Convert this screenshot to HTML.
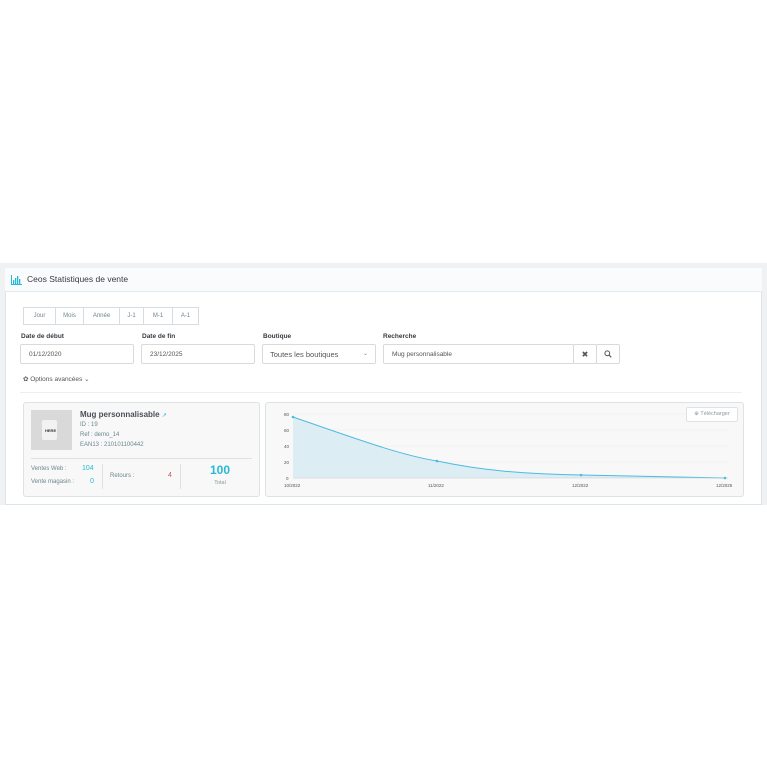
<!DOCTYPE html>
<html><head><meta charset="utf-8"><style>
*{box-sizing:border-box;margin:0;padding:0}
body{width:767px;height:767px;background:#fff;font-family:"Liberation Sans",sans-serif;position:relative;overflow:hidden;color:#363a41}
.a{position:absolute}
.band{left:0;top:263px;width:767px;height:242px;background:#eff1f2}
.panel{left:5px;top:268px;width:757px;height:237px;background:#fff;border:1px solid #dbe6e9}
.head{left:5px;top:268px;width:757px;height:24px;background:#fafbfc;border-bottom:1px solid #e4eaec}
.lbl{font-size:6.5px;font-weight:bold;color:#363a41}
.inp{height:20px;border:1px solid #dadada;border-radius:2px;background:#fff;font-size:6.5px;color:#555;padding-left:8px;line-height:19px}
.btn{top:307px;height:18px;border:1px solid #d5dde0;font-size:6px;color:#6c868e;text-align:center;line-height:17px;background:#fff}
.card{border:1px solid #dde2e4;border-radius:3px;background:#f8f8f8}
.s{font-size:6px;color:#6c868e}
</style></head><body>
<div class="a band"></div>
<div class="a panel"></div>
<div class="a head"></div>
<svg class="a" style="left:11px;top:275px" width="11" height="10" viewBox="0 0 11 10"><g fill="#25b9d7"><rect x="0" y="0" width="1" height="10"/><rect x="0" y="9" width="11" height="1"/><rect x="2" y="5" width="1.3" height="4"/><rect x="4" y="3" width="1.3" height="6"/><rect x="6" y="1" width="1.3" height="8"/><rect x="8" y="4" width="1.3" height="5"/></g></svg>
<div class="a" style="left:27px;top:274px;font-size:8.5px;color:#363a41">Ceos Statistiques de vente</div>
<div class="a btn" style="left:23px;width:33px">Jour</div>
<div class="a btn" style="left:55px;width:29px">Mois</div>
<div class="a btn" style="left:83px;width:37px">Année</div>
<div class="a btn" style="left:119px;width:25px">J-1</div>
<div class="a btn" style="left:143px;width:30px">M-1</div>
<div class="a btn" style="left:172px;width:27px">A-1</div>
<div class="a lbl" style="left:21px;top:333px">Date de début</div>
<div class="a lbl" style="left:142px;top:333px">Date de fin</div>
<div class="a lbl" style="left:263px;top:333px">Boutique</div>
<div class="a lbl" style="left:383px;top:333px">Recherche</div>
<div class="a inp" style="left:20px;top:344px;width:114px">01/12/2020</div>
<div class="a inp" style="left:141px;top:344px;width:114px">23/12/2025</div>
<div class="a inp" style="left:262px;top:344px;width:114px;font-size:7.5px;padding-left:7px">Toutes les boutiques<span style="position:absolute;right:7px;font-size:6px;color:#888">⌄</span></div>
<div class="a inp" style="left:383px;top:344px;width:191px">Mug personnalisable</div>
<div class="a inp" style="left:573px;top:344px;width:24px;padding:0;text-align:center;font-size:8px;color:#555">✖</div>
<div class="a inp" style="left:596px;top:344px;width:24px;padding:0;text-align:center;color:#555"><svg width="8" height="8" viewBox="0 0 8 8" style="margin-top:5px"><circle cx="3.3" cy="3.3" r="2.4" fill="none" stroke="#555" stroke-width="1"/><path d="M5 5l2.3 2.3" stroke="#555" stroke-width="1.1"/></svg></div>
<div class="a" style="left:23px;top:375px;font-size:6.5px;color:#555">✿ Options avancées ⌄</div>
<div class="a" style="left:20px;top:392px;width:722px;height:1px;background:#eceeef"></div>
<div class="a card" style="left:23px;top:402px;width:237px;height:95px"></div>
<div class="a" style="left:31px;top:410px;width:41px;height:40px;background:#d9d9d9"></div>
<div class="a" style="left:42px;top:420px;width:15px;height:20px;background:#f2f2f2;border-radius:2px"></div>
<div class="a" style="left:45px;top:428px;font-size:4px;font-weight:bold;color:#333">HERE</div>
<div class="a" style="left:80px;top:410px;font-size:8px;font-weight:bold;color:#4a4f55">Mug personnalisable <span style="color:#25b9d7;font-size:6px;font-weight:normal">↗</span></div>
<div class="a s" style="left:80px;top:422px">ID : 19</div>
<div class="a s" style="left:80px;top:432px">Ref : demo_14</div>
<div class="a s" style="left:80px;top:442px">EAN13 : 210101100442</div>
<div class="a" style="left:31px;top:458px;width:221px;height:1px;background:#dde2e4"></div>
<div class="a s" style="left:31px;top:466px">Ventes Web :</div>
<div class="a s" style="left:31px;top:479px">Vente magasin :</div>
<div class="a" style="left:82px;top:465px;font-size:7px;color:#25b9d7">104</div>
<div class="a" style="left:90px;top:478px;font-size:7px;color:#25b9d7">0</div>
<div class="a" style="left:102px;top:464px;width:1px;height:25px;background:#dde2e4"></div>
<div class="a s" style="left:110px;top:473px">Retours :</div>
<div class="a" style="left:168px;top:472px;font-size:7px;color:#c05c5c">4</div>
<div class="a" style="left:180px;top:464px;width:1px;height:25px;background:#dde2e4"></div>
<div class="a" style="left:200px;top:463px;width:40px;text-align:center;font-size:12px;font-weight:bold;color:#25b9d7">100</div>
<div class="a" style="left:200px;top:480px;width:40px;text-align:center;font-size:5.5px;color:#8a9aa0">Total</div>
<div class="a card" style="left:265px;top:402px;width:479px;height:95px"></div>
<svg class="a" style="left:265px;top:402px" width="479" height="95" viewBox="265 402 479 95">
<g stroke="#ebebeb" stroke-width="0.5"><line x1="293" y1="414" x2="728" y2="414"/><line x1="293" y1="430" x2="728" y2="430"/><line x1="293" y1="446" x2="728" y2="446"/><line x1="293" y1="462" x2="728" y2="462"/></g>
<path d="M293,417 C360,440 400,455 437,461 C480,470 520,474 581,475 L725,478 L725,478 L293,478 Z" fill="#dcedf3"/>
<path d="M293,417 C360,440 400,455 437,461 C480,470 520,474 581,475 L725,478" fill="none" stroke="#4dbbe0" stroke-width="1"/>
<line x1="293" y1="478" x2="728" y2="478" stroke="#ccc" stroke-width="0.5"/>
<g fill="#4dbbe0"><circle cx="293" cy="417" r="1.3"/><circle cx="437" cy="461" r="1.3"/><circle cx="581" cy="475" r="1.3"/><circle cx="725" cy="478" r="1.3"/></g>
<g font-size="4.5" fill="#555" font-family="Liberation Sans"><text x="284" y="416">80</text><text x="284" y="432">60</text><text x="284" y="448">40</text><text x="284" y="464">20</text><text x="286" y="480">0</text>
<text x="284" y="487">10/2022</text><text x="428" y="487">11/2022</text><text x="572" y="487">12/2022</text><text x="716" y="487">12/2025</text></g>
</svg>
<div class="a" style="left:686px;top:407px;width:52px;height:15px;border:1px solid #dde2e4;border-radius:2px;background:#fff;font-size:5.5px;color:#8a9aa0;text-align:center;line-height:13px">⊕ Télécharger</div>
</body></html>
